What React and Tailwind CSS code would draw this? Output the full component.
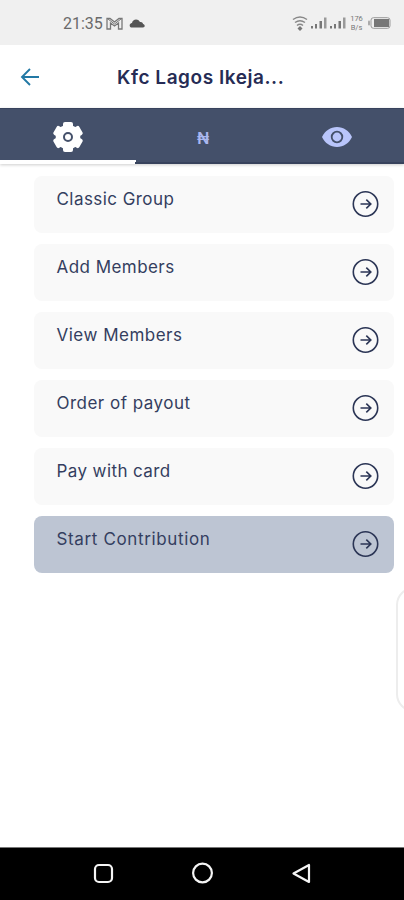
import React from "react";

const menuItems = [
  { label: "Classic Group", tracking: "tracking-[0.44px]" },
  { label: "Add Members", tracking: "tracking-[0.45px]" },
  { label: "View Members", tracking: "tracking-[0.5px]" },
  { label: "Order of payout", tracking: "tracking-[0.48px]" },
  { label: "Pay with card", tracking: "tracking-[0.4px]" },
  { label: "Start Contribution", tracking: "tracking-[0.64px]", active: true },
];

const SignalIcon = () => (
  <svg width="16" height="12" viewBox="0 0 16 12" fill="#777777">
    <rect x="0" y="9" width="2" height="2.5" />
    <rect x="4" y="7" width="2" height="4.5" />
    <rect x="8.5" y="4" width="2.5" height="7.5" />
    <rect x="13" y="0.5" width="2.5" height="11" fill="#999999" />
  </svg>
);

const GearIcon = () => (
  <svg width="30" height="30" viewBox="-15 -15 30 30">
    <g fill="#ffffff">
      <circle r="12.3" />
      {[0, 60, 120, 180, 240, 300].map((angle) => (
        <rect key={angle} x="-5" y="-14.9" width="10" height="8" rx="2" transform={`rotate(${angle})`} />
      ))}
    </g>
    <circle r="4" fill="#ffffff" stroke="#44506a" strokeWidth="2" />
  </svg>
);

const EyeIcon = () => (
  <svg width="30" height="22" viewBox="-15 -11 30 22">
    <path d="M-15 0C-12-6.200-6.500-10 0-10S12-6.200 15 0C12 6.200 6.500 10 0 10S-12 6.200-15 0Z" fill="#b9c5fb" />
    <circle r="5.300" fill="#b9c5fb" stroke="#44506a" strokeWidth="1.800" />
  </svg>
);

const ArrowCircle = () => (
  <svg width="28" height="28" viewBox="0 0 28 28" fill="none" stroke="#2b3555" strokeWidth="1.600">
    <circle cx="13.500" cy="14" r="12.200" />
    <path d="M8.500 14H18.800M14.300 9.600L18.800 14L14.300 18.400" />
  </svg>
);

const StatusBar = () => (
  <div className="flex h-[45px] shrink-0 items-center bg-[#f0f0f0] pl-[63px] pr-[13px] pt-px text-[#6a6a6a]">
    <span className="w-[41px] whitespace-nowrap pt-px font-['Roboto',sans-serif] text-[16px] leading-5">21:35</span>
    <svg className="ml-[2px]" width="17" height="13" viewBox="0 0 17 13" fill="none" stroke="#777777">
      <path d="M1 1.500H4L8.500 5L13 1.500H16V12H12.500V6L8.500 9L4.500 6V12H1Z" strokeWidth="1.300" />
      <path d="M2 2L8.500 7L15 2" />
    </svg>
    <svg className="ml-[6px]" width="16" height="10" viewBox="0 0 16 10" fill="#555555">
      <path d="M3 9.500C0 9.500-.200 5.500 3 5C3.500 1 9 0 11 4C13 3.600 14 5 14 6C16.500 6.500 16 9.500 14 9.500Z" />
    </svg>
    <div className="ml-auto flex items-center">
      <svg width="16" height="15" viewBox="0 0 16 15" fill="none" stroke="#888888" strokeWidth="1.500">
        <path d="M1 3.500Q8-1.300 15 3.500M3 6.500Q8 3 13 6.500M5 9.500Q8 7 11 9.500" />
        <path d="M8 10L10.500 12.500L8 15L5.500 12.500Z" fill="#777777" stroke="none" />
      </svg>
      <div className="ml-[3px] flex gap-[3px]">
        <SignalIcon />
        <SignalIcon />
      </div>
      <div className="ml-[3px] w-[15px] text-center font-['Roboto',sans-serif] text-[7.5px] leading-[9px] text-[#777777]">
        <div>176</div>
        <div>B/s</div>
      </div>
      <svg className="ml-[4px]" width="23" height="12" viewBox="0 0 23 12">
        <rect x="3" y="0.700" width="19" height="10.600" rx="2.500" fill="none" stroke="#999999" />
        <rect x="6" y="2" width="15" height="8" fill="#777777" />
        <rect x="0" y="3.500" width="2" height="5" rx="1" fill="#aaaaaa" />
      </svg>
    </div>
  </div>
);

const App = () => {
  return (
    <div className="relative flex h-[900px] w-[404px] flex-col overflow-hidden bg-white font-['Inter','Liberation_Sans',sans-serif]">
      <StatusBar />

      {/* Header */}
      <header className="flex h-[63px] shrink-0 items-center pl-[20px] pt-[2px]">
        <svg className="mb-[2px]" width="20" height="18" viewBox="0 0 20 18" fill="none" stroke="#2379a5" strokeWidth="1.900">
          <path d="M19 9H2M10 1L2 9L10 17" />
        </svg>
        <h1 className="ml-[77px] whitespace-nowrap text-[19px] font-semibold leading-6 tracking-[0.55px] text-[#262c55]">
          Kfc Lagos Ikeja...
        </h1>
      </header>

      {/* Tabs */}
      <nav className="grid h-[56px] shrink-0 grid-cols-3 border-t border-[#38435d] bg-[#44506a] shadow-[0_1px_3px_rgba(0,0,0,0.2)]">
        <div className="-mr-px flex items-center justify-center border-b-[4px] border-white pl-px pt-[4px]">
          <GearIcon />
        </div>
        <div className="flex items-center justify-center border-b-2 border-[#38435d] pl-[2px] pt-[4px] text-[16px] font-semibold text-[#aab7f0]">
          ₦
        </div>
        <div className="flex items-center justify-center border-b-2 border-[#38435d] pt-[2px]">
          <EyeIcon />
        </div>
      </nav>

      {/* Group actions */}
      <main className="flex flex-1 flex-col gap-[11px] pl-[34px] pr-[10px] pt-[12px]">
        {menuItems.map((item) => (
          <div
            key={item.label}
            className={`flex h-[57px] shrink-0 justify-between rounded-lg pl-[22.5px] pr-[14px] ${
              item.active ? "bg-[#bdc5d3]" : "bg-[#f9f9f9]"
            }`}
          >
            <span className={`whitespace-nowrap pt-[11px] text-[17px] leading-6 text-[#343e60] ${item.tracking}`}>
              {item.label}
            </span>
            <div className="pt-[14px]">
              <ArrowCircle />
            </div>
          </div>
        ))}
      </main>

      {/* Edge panel handle */}
      <div className="absolute left-[396px] top-[587px] h-[125px] w-[40px] rounded-[18px] border-2 border-[#ededed] bg-white" />

      {/* System navigation */}
      <footer className="h-[53px] shrink-0 border-t border-[#777777] bg-black pl-[93px] pr-[93px]">
        <div className="flex h-full items-center justify-between pb-[2px]">
          <svg width="21" height="21" viewBox="0 0 21 21" fill="none" stroke="#f5f5f5" strokeWidth="2.200">
            <rect x="2" y="2" width="17" height="17" rx="4" />
          </svg>
          <svg width="22" height="22" viewBox="0 0 22 22" fill="none" stroke="#f5f5f5" strokeWidth="2.200">
            <circle cx="10.500" cy="11" r="9.400" />
          </svg>
          <svg width="19" height="21" viewBox="0 0 19 21" fill="none" stroke="#f5f5f5" strokeWidth="2.200" strokeLinejoin="round">
            <path d="M17 2V19L1.500 10.500Z" />
          </svg>
        </div>
      </footer>
    </div>
  );
};

export default App;
